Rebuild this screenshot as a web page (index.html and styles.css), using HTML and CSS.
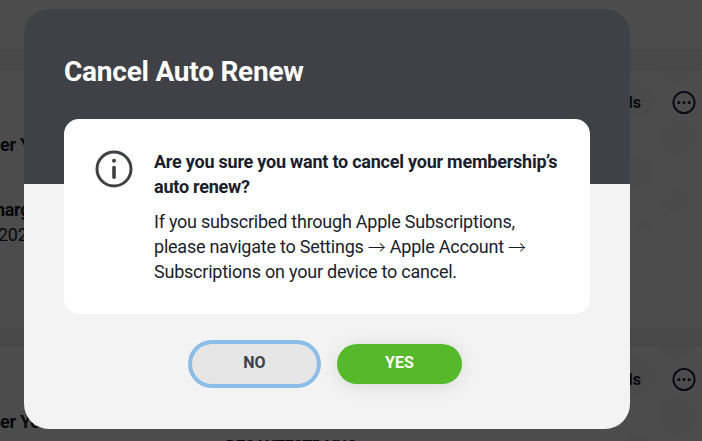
FILE: index.html
```html
<!DOCTYPE html>
<html lang="en">

<head>
    <meta charset="UTF-8">
    <meta name="viewport" content="width=device-width, initial-scale=1.0">
    <title>Cancel Auto Renew</title>
    <link rel="stylesheet" href="styles.css">
</head>

<body>
    <div class="page">
        <header class="topbar"></header>

        <section class="membership">
            <div class="details">
                <div class="label">er Yo</div>
                <div class="label charge">harg</div>
                <div class="date">202</div>
            </div>
            <div class="actions">
                <span class="link">ls</span>
                <svg class="more" viewBox="0 0 24 24">
                    <circle cx="12" cy="11.5" r="10.6" fill="none" stroke="currentColor" stroke-width="1.8"/>
                    <circle cx="6.9" cy="11.5" r="1.5" fill="currentColor"/>
                    <circle cx="12" cy="11.5" r="1.5" fill="currentColor"/>
                    <circle cx="17.1" cy="11.5" r="1.5" fill="currentColor"/>
                </svg>
            </div>
            <svg class="dots" viewBox="0 0 102 256">
                <ellipse cx="36" cy="29" rx="20" ry="20"/>
                <ellipse cx="77" cy="-6" rx="20" ry="19"/>
                <ellipse cx="77" cy="68" rx="20" ry="19"/>
                <ellipse cx="117" cy="29" rx="20" ry="20"/>
                <ellipse cx="38" cy="102" rx="17" ry="14"/>
                <ellipse cx="77" cy="131" rx="15" ry="11"/>
                <ellipse cx="44" cy="153" rx="11" ry="6"/>
                <ellipse cx="116" cy="103" rx="16" ry="14"/>
                <ellipse cx="111" cy="154" rx="10" ry="6"/>
            </svg>
        </section>

        <section class="membership">
            <div class="details">
                <div class="label">er Yo</div>
            </div>
            <div class="actions">
                <span class="link">ls</span>
                <svg class="more" viewBox="0 0 24 24">
                    <circle cx="12" cy="11.5" r="10.6" fill="none" stroke="currentColor" stroke-width="1.8"/>
                    <circle cx="6.9" cy="11.5" r="1.5" fill="currentColor"/>
                    <circle cx="12" cy="11.5" r="1.5" fill="currentColor"/>
                    <circle cx="17.1" cy="11.5" r="1.5" fill="currentColor"/>
                </svg>
            </div>
            <svg class="dots" viewBox="0 0 102 256">
                <ellipse cx="36" cy="29" rx="20" ry="20"/>
                <ellipse cx="77" cy="-6" rx="20" ry="19"/>
                <ellipse cx="77" cy="68" rx="20" ry="19"/>
                <ellipse cx="117" cy="29" rx="20" ry="20"/>
                <ellipse cx="38" cy="102" rx="17" ry="14"/>
            </svg>
            <div class="code">DECAUTESTR VNG</div>
        </section>
    </div>

    <div class="overlay">
        <div class="modal" role="dialog" aria-labelledby="modal-title">
            <h1 class="modal-title" id="modal-title">Cancel Auto Renew</h1>
            <div class="message">
                <svg class="info" viewBox="0 0 38 38">
                    <circle cx="19" cy="19" r="17" fill="none" stroke="#404146" stroke-width="3"/>
                    <circle cx="19" cy="10.7" r="2" fill="#404146"/>
                    <path d="M19 17.6V27.2" fill="none" stroke="#404146" stroke-width="3.6" stroke-linecap="round"/>
                </svg>
                <div class="message-text">
                    <p class="question">Are you sure you want to cancel your membership’s auto renew?</p>
                    <p class="note">If you subscribed through Apple Subscriptions, please navigate to Settings <span class="arrow">→</span> Apple Account <span class="arrow">→</span> Subscriptions on your device to cancel.</p>
                </div>
            </div>
            <div class="buttons">
                <button class="button no">NO</button>
                <button class="button yes">YES</button>
            </div>
        </div>
    </div>
</body>

</html>
```

FILE: styles.css
```css
* {
    box-sizing: border-box;
}

body {
    margin: 0;
    height: 100vh;
    overflow: hidden;
    background-color: #f0f0f0;
    font-family: Roboto, "Liberation Sans", sans-serif;
    color: #1a1e2c;
}

.page {
    display: flex;
    flex-direction: column;
    gap: 20px;
    height: 441px;
    overflow: hidden;
}

.topbar {
    flex: none;
    height: 50px;
    background-color: #fff;
    border-bottom: 1px solid #dcdcdc;
}

.membership {
    position: relative;
    display: flex;
    flex: none;
    justify-content: space-between;
    height: 257px;
    background-color: #fff;
    overflow: hidden;
}

.details {
    padding-top: 62px;
    font-size: 18px;
    line-height: 25px;
    letter-spacing: -0.3px;
}

.label {
    font-weight: 700;
}

.charge {
    margin: 40px 0 0 -5px;
}

.date {
    margin-left: -2px;
}

.actions {
    position: relative;
    z-index: 1;
    display: flex;
    align-items: center;
    gap: 31px;
    height: 25px;
    margin: 20px 6px 0 0;
}

.link {
    font-size: 16px;
    font-weight: 700;
}

.more {
    width: 24px;
    height: 24px;
}

.dots {
    position: absolute;
    top: 0;
    right: 0;
    width: 102px;
    height: 256px;
    fill: #f8f8f8;
}

.code {
    position: absolute;
    top: 89px;
    left: 226px;
    font-size: 16px;
    line-height: 22px;
    font-weight: 700;
    letter-spacing: -0.4px;
    white-space: nowrap;
}

.overlay {
    position: fixed;
    inset: 0;
    z-index: 2;
    padding: 9px 0 0 24px;
    background-color: rgba(0, 0, 0, 0.7);
}

.modal {
    width: 606px;
    height: 420px;
    padding: 45px 40px 0;
    border-radius: 25px;
    background: linear-gradient(#404146 175px, #f3f3f3 175px);
}

.modal-title {
    margin: 0 0 29px;
    color: #fff;
    font-size: 28px;
    line-height: 36px;
    font-weight: 700;
    letter-spacing: -0.24px;
}

.message {
    display: flex;
    gap: 21px;
    height: 195px;
    padding: 30px 30px 0 31px;
    border-radius: 15px;
    background-color: #fff;
    font-size: 18px;
    line-height: 25px;
    letter-spacing: -0.23px;
}

.info {
    flex: none;
    width: 38px;
    height: 38px;
    margin-top: 1px;
}

.message-text p {
    margin: 0;
}

.question {
    font-weight: 700;
}

.message-text .note {
    margin-top: 10px;
}

.arrow {
    font-family: "Noto Sans CJK JP", sans-serif;
    font-weight: 300;
    line-height: 1;
    vertical-align: -1px;
}

.buttons {
    display: flex;
    gap: 20px;
    margin: 30px 0 0 128px;
}

.button {
    width: 125px;
    height: 40px;
    padding: 0 0 3px;
    border: none;
    border-radius: 20px;
    font-family: inherit;
    font-size: 16px;
    font-weight: 700;
    cursor: pointer;
}

.button.no {
    background-color: #e6e6e6;
    color: #404146;
    box-shadow: 0 0 0 4px #8abde8;
}

.button.yes {
    background-color: #56b92c;
    color: #fff;
    box-shadow: 0 2px 20px rgba(0, 0, 0, 0.1);
}
```
